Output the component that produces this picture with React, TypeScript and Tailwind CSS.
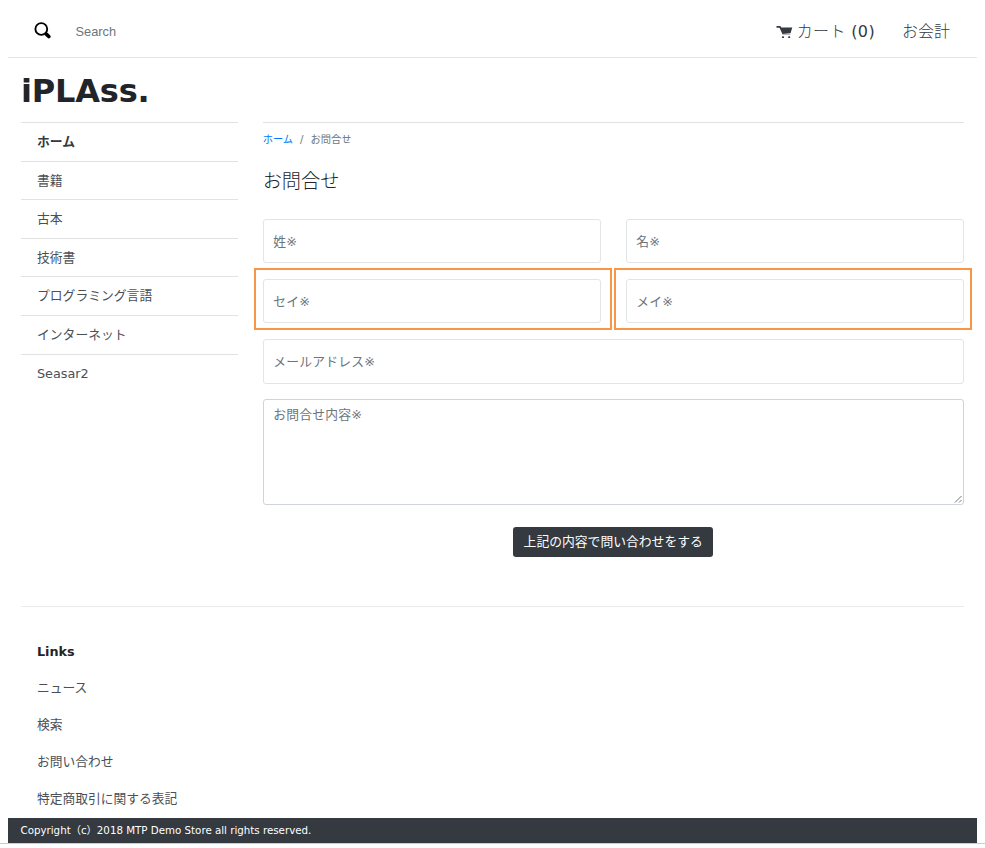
import React from "react";

const categories = ["書籍", "古本", "技術書", "プログラミング言語", "インターネット", "Seasar2"];
const links = ["ニュース", "検索", "お問い合わせ", "特定商取引に関する表記"];

function SearchIcon() {
  return (
    <svg className="ml-[26px] mt-[22px] h-[17px] w-[17px] shrink-0" viewBox="0 0 17 17" fill="none" stroke="#000">
      <circle cx="7.3" cy="7" r="5.9" strokeWidth="1.9" />
      <path d="M11.2 11l1 1" strokeWidth="2" />
      <path d="M12.6 12.4l2.2 2.1" strokeWidth="3.6" strokeLinecap="round" />
    </svg>
  );
}

function CartIcon() {
  return (
    <svg className="mr-1 mt-[26px] h-[13px] w-[17px]" viewBox="0 0 17 13" fill="#343a40">
      <path d="M.5 0h3.9l.9 1.6h11L14.5 7.2 6.4 8 3.5 1.7H.5z" />
      <path d="M6 8h8.5v1H6.5z" opacity=".35" />
      <rect x="6" y="10.3" width="2" height="1.8" rx=".6" />
      <rect x="12.2" y="10.3" width="2" height="1.8" rx=".6" />
    </svg>
  );
}

function Field({ label, highlighted = false }: { label: string; highlighted?: "left" | "right" | false }) {
  return (
    <div className="relative h-[44.5px] flex-1 rounded-[3px] border border-[#e2e5e8] pl-[9.5px] text-[12.8px] leading-[43px] tracking-[0.2px] text-[#6c757d]">
      {label}
      {highlighted === "left" && (
        <span className="pointer-events-none absolute -bottom-[8px] -left-[10px] -right-[12px] -top-[12px] border-2 border-[#f79646]" />
      )}
      {highlighted === "right" && (
        <span className="pointer-events-none absolute -bottom-[8px] -left-[13px] -right-[9px] -top-[12px] border-2 border-[#f79646]" />
      )}
    </div>
  );
}

export default function App() {
  return (
    <div className="h-[848px] w-[985px] overflow-hidden bg-white font-['DejaVu_Sans','Noto_Sans_CJK_JP',sans-serif] text-[#212529]">
      <div className="ml-2 flex h-[843px] w-[968.5px] flex-col">
        <header className="flex h-[58px] shrink-0 border-b border-[#e5e5e5]">
          <SearchIcon />
          <span className="ml-[24.5px] mt-[22px] font-['Liberation_Sans',sans-serif] text-[12.8px] leading-5 text-[#6c757d]">Search</span>
          <div className="ml-auto mr-[26.5px] flex whitespace-nowrap text-[16px] leading-[63px] text-[#343a40]">
            <CartIcon />
            <span className="tracking-[0.35px]">
              <span className="font-light">カート</span> (0)
            </span>
            <span className="ml-[27px] font-light">お会計</span>
          </div>
        </header>

        <h1 className="ml-[13px] h-[64px] shrink-0 text-[32px] font-bold leading-[66px] tracking-[-0.2px]">iPLAss.</h1>

        <div className="ml-[13px] flex h-[484px] shrink-0">
          <nav className="w-[216.5px] shrink-0 text-[12.8px] leading-[38px] text-[#495057]">
            <div className="h-[38.6px] border-t border-[#e2e2e2] pl-4 font-bold text-[#343a40]">ホーム</div>
            {categories.map((name) => (
              <div key={name} className="h-[38.6px] border-t border-[#e2e2e2] pl-4">{name}</div>
            ))}
          </nav>

          <main className="ml-[25.2px] w-[701px] border-t border-[#e2e2e2]">
            <div className="flex h-[33px] text-[10.24px] leading-[33px] text-[#6c757d]">
              <span className="text-[#007bff]">ホーム</span>
              <span className="mx-[7px]">/</span>
              <span>お問合せ</span>
            </div>
            <h2 className="h-[62.5px] text-[19.2px] font-light leading-[51px]">お問合せ</h2>
            <div className="flex flex-col gap-[15.8px]">
              <div className="flex gap-[25px]">
                <Field label="姓※" />
                <Field label="名※" />
              </div>
              <div className="flex gap-[25px]">
                <Field label="セイ※" highlighted="left" />
                <Field label="メイ※" highlighted="right" />
              </div>
              <div className="flex">
                <Field label="メールアドレス※" />
              </div>
              <div className="flex h-[105.2px] justify-between rounded-[3px] border border-[#ced4da] pl-[9.5px] text-[12.8px] leading-[29px] tracking-[0.2px] text-[#6c757d]">
                お問合せ内容※
                <svg className="mb-px mr-px h-2 w-2 self-end" viewBox="0 0 8 8" stroke="#777" fill="none">
                  <path d="M1 7.5L7.5 1M5 7.5L7.5 5" />
                </svg>
              </div>
            </div>
            <button className="mx-auto mt-[22px] block h-[30px] w-[200px] whitespace-nowrap rounded-[3px] bg-[#343a40] text-[12.8px] leading-[30px] text-white">
              上記の内容で問い合わせをする
            </button>
          </main>
        </div>

        <section className="ml-[13px] w-[943px] border-t border-[#ebebeb] pl-4 pt-[26.5px] text-[12.75px] leading-[36.9px] text-[#495057]">
          <h3 className="font-bold text-[#212529]">Links</h3>
          {links.map((name) => (
            <div key={name}>{name}</div>
          ))}
        </section>
        <footer className="mt-auto h-[25px] shrink-0 bg-[#343a40] pl-[12.5px] text-[10.28px] leading-[25px] text-white">
          Copyright（c）2018 MTP Demo Store all rights reserved.
        </footer>
      </div>
      <div className="h-px bg-[#ccc]" />
    </div>
  );
}
